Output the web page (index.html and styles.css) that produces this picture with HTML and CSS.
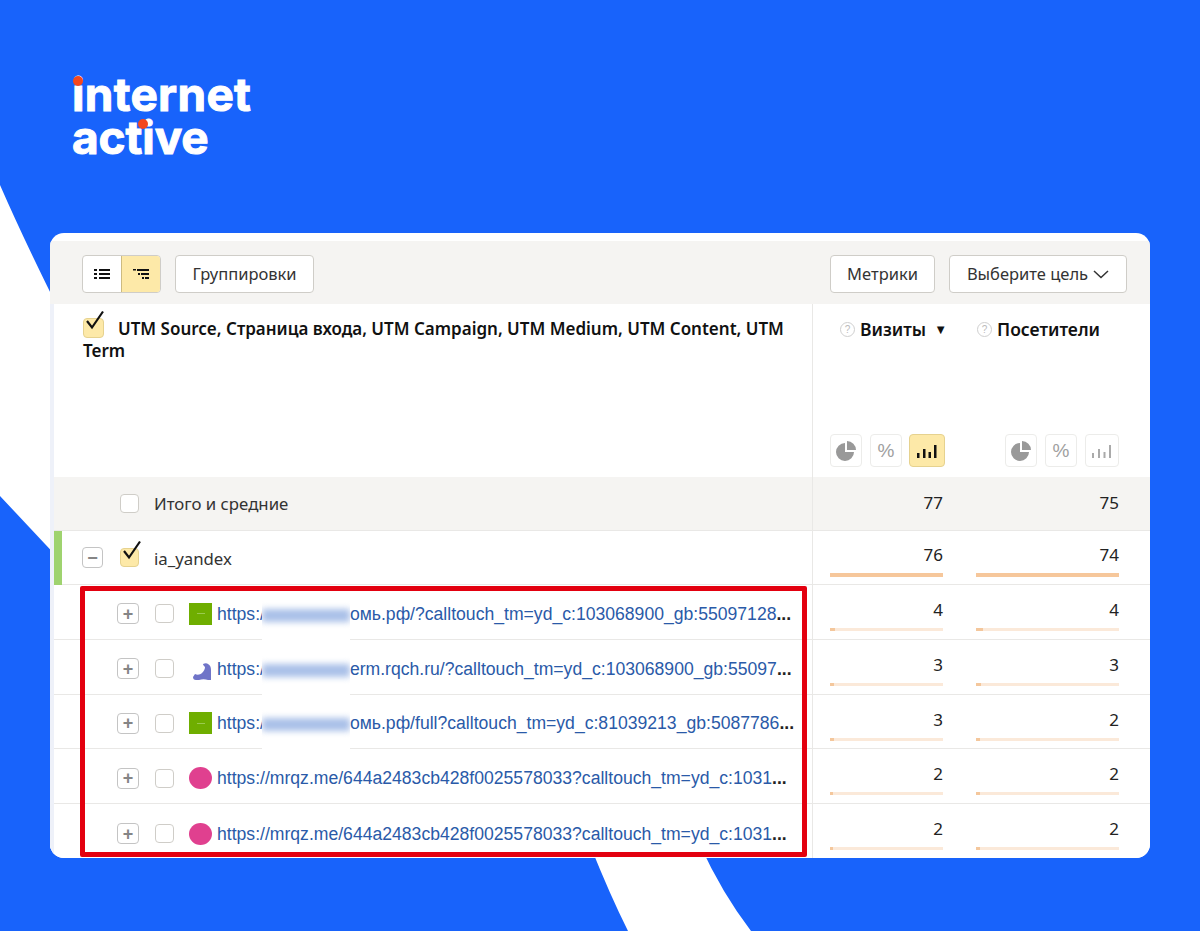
FILE: index.html
```html
<!DOCTYPE html>
<html lang="ru">
<head>
<meta charset="utf-8">
<title>internet active</title>
<link rel="stylesheet" href="styles.css">
</head>
<body>
<main class="page">
  <svg class="bg" width="1200" height="931" viewBox="0 0 1200 931" aria-hidden="true">
    <path fill="#fff" d="M0 185 Q24 240 60 312 L60 560 L0 496Z"/>
    <path fill="#fff" d="M590 845 L700 845 Q722 893 751 931 L628 931 Q610 895 590 845Z"/>
  </svg>

  <div class="logo">
    <div class="logo-line logo-top">internet<i class="dot dot-a"></i></div>
    <div class="logo-line">active<i class="dot dot-b"></i></div>
  </div>

  <section class="card">
    <div class="toolbar">
      <div class="tool-left">
        <div class="seg">
          <span class="seg-btn">
            <svg width="16" height="12" viewBox="0 0 16 12"><path fill="#111" d="M0 1h3v2H0zM5 1h11v2H5zM0 5h3v2H0zM5 5h11v2H5zM0 9h3v2H0zM5 9h11v2H5z"/></svg>
          </span>
          <span class="seg-btn seg-on">
            <svg width="16" height="12" viewBox="0 0 16 12"><path fill="#111" d="M0 1h3v1.500H0zM4 1h12v2H4zM5 5h2v2H5zM8 5h8v2H8zM9 9h2v2H9zM12 9h4v2h-4z"/></svg>
          </span>
        </div>
        <button class="btn btn-group">Группировки</button>
      </div>
      <div class="tool-right">
        <button class="btn btn-metrics">Метрики</button>
        <button class="btn btn-goal">Выберите цель
          <svg width="16" height="9" viewBox="0 0 16 9"><path fill="none" stroke="#333" stroke-width="1.500" d="M1 1l7 6.500L15 1"/></svg>
        </button>
      </div>
    </div>

    <div class="row row-head">
      <div class="left head-left">
        <p class="head-title"><span class="cb cb-on cb-head"><svg class="tick" width="24" height="24" viewBox="0 0 24 24"><path fill="none" stroke="#111" stroke-width="2.200" d="M4 11l5 6.500L20 1.500"/></svg></span>UTM Source, Страница входа, UTM Campaign, UTM Medium, UTM Content, UTM Term</p>
      </div>
      <div class="right head-right">
        <div class="metric metric-a">
          <div class="metric-title"><span class="help">?</span>Визиты<span class="sort">▼</span></div>
          <div class="minis">
            <span class="mini"><svg width="22" height="22" viewBox="0 0 22 22"><path fill="#999" d="M10 3v9h9a9 9 0 1 1-9-9zM12 1a9 9 0 0 1 9 9h-9z"/></svg></span>
            <span class="mini mini-pct">%</span>
            <span class="mini mini-on"><svg width="22" height="16" viewBox="0 0 22 16"><path fill="#111" d="M1 10h2.500v5H1zM7 6h2.500v9H7zM12.500 9H15v6h-2.500zM18 2h2.500v13H18z"/></svg></span>
          </div>
        </div>
        <div class="metric metric-b">
          <div class="metric-title"><span class="help">?</span>Посетители</div>
          <div class="minis">
            <span class="mini"><svg width="22" height="22" viewBox="0 0 22 22"><path fill="#999" d="M10 3v9h9a9 9 0 1 1-9-9zM12 1a9 9 0 0 1 9 9h-9z"/></svg></span>
            <span class="mini mini-pct">%</span>
            <span class="mini mini-last"><svg width="22" height="16" viewBox="0 0 22 16"><path fill="#aaa" d="M1 10h2v5H1zM7 6h2v9H7zM12.500 9h2v6h-2zM18 2h2v13h-2z"/></svg></span>
          </div>
        </div>
      </div>
    </div>

    <div class="row row-total">
      <div class="left total-left"><span class="cb"></span><span class="label">Итого и средние</span></div>
      <div class="right"><div class="num-cell"><span class="num">77</span></div><div class="num-cell cell-b"><span class="num">75</span></div></div>
    </div>

    <div class="row row-group">
      <div class="left group-left">
        <span class="marker"></span>
        <span class="exp exp-minus">−</span>
        <span class="cb cb-on"><svg class="tick" width="24" height="24" viewBox="0 0 24 24"><path fill="none" stroke="#111" stroke-width="2.200" d="M4 11l5 6.500L20 1.500"/></svg></span>
        <span class="label">ia_yandex</span>
      </div>
      <div class="right">
        <div class="num-cell"><span class="num">76</span><span class="bar bar-full"></span></div>
        <div class="num-cell cell-b"><span class="num">74</span><span class="bar bar-full"></span></div>
      </div>
    </div>

    <div class="row row-sub">
      <div class="left sub-left">
        <span class="exp">+</span><span class="cb"></span><span class="fav fav-green"><i></i></span>
        <span class="url">https:/<span class="smudge"></span>омь.рф/?calltouch_tm=yd_c:103068900_gb:55097128<b>...</b></span>
      </div>
      <div class="right">
        <div class="num-cell"><span class="num">4</span><span class="bar"><i style="width:5px"></i></span></div>
        <div class="num-cell cell-b"><span class="num">4</span><span class="bar"><i style="width:7px"></i></span></div>
      </div>
    </div>

    <div class="row row-sub">
      <div class="left sub-left">
        <span class="exp">+</span><span class="cb"></span>
        <span class="fav"><svg width="23" height="22" viewBox="0 0 23 22"><path fill="#6f74c8" d="M14 6c2-1 4-1 5 0 2 1 3 3 3 6v10h-3c-3-1-6-1-9 0H7c-2 0-3-1-3-3l2-3c2 1 5 1 7-1 2-2 3-4 3-6-1-1-2-2-2-3z"/></svg></span>
        <span class="url">https:/<span class="smudge"></span>erm.rqch.ru/?calltouch_tm=yd_c:103068900_gb:55097<b>...</b></span>
      </div>
      <div class="right">
        <div class="num-cell"><span class="num">3</span><span class="bar"><i style="width:4px"></i></span></div>
        <div class="num-cell cell-b"><span class="num">3</span><span class="bar"><i style="width:5px"></i></span></div>
      </div>
    </div>

    <div class="row row-sub">
      <div class="left sub-left">
        <span class="exp">+</span><span class="cb"></span><span class="fav fav-green"><i></i></span>
        <span class="url">https:/<span class="smudge"></span>омь.рф/full?calltouch_tm=yd_c:81039213_gb:5087786<b>...</b></span>
      </div>
      <div class="right">
        <div class="num-cell"><span class="num">3</span><span class="bar"><i style="width:4px"></i></span></div>
        <div class="num-cell cell-b"><span class="num">2</span><span class="bar"><i style="width:4px"></i></span></div>
      </div>
    </div>

    <div class="row row-sub">
      <div class="left sub-left">
        <span class="exp">+</span><span class="cb"></span><span class="fav fav-pink"></span>
        <span class="url">https://mrqz.me/644a2483cb428f0025578033?calltouch_tm=yd_c:1031<b>...</b></span>
      </div>
      <div class="right">
        <div class="num-cell"><span class="num">2</span><span class="bar"><i style="width:3px"></i></span></div>
        <div class="num-cell cell-b"><span class="num">2</span><span class="bar"><i style="width:4px"></i></span></div>
      </div>
    </div>

    <div class="row row-sub row-last">
      <div class="left sub-left">
        <span class="exp">+</span><span class="cb"></span><span class="fav fav-pink"></span>
        <span class="url">https://mrqz.me/644a2483cb428f0025578033?calltouch_tm=yd_c:1031<b>...</b></span>
      </div>
      <div class="right">
        <div class="num-cell"><span class="num">2</span><span class="bar"><i style="width:3px"></i></span></div>
        <div class="num-cell cell-b"><span class="num">2</span><span class="bar"><i style="width:4px"></i></span></div>
      </div>
    </div>

    <div class="highlight"></div>
  </section>
</main>
</body>
</html>
```
FILE: styles.css
```css
* { box-sizing: border-box; }
html, body { margin: 0; padding: 0; }
body { background: #1863fb; font-family: "Noto Sans", "Liberation Sans", sans-serif; color: #222; }

.page {
  position: relative;
  width: 1200px;
  height: 931px;
  overflow: hidden;
  background: #1863fb;
  padding-top: 73px;
}
.bg { position: absolute; left: 0; top: 0; }

/* logo */
.logo {
  position: relative;
  margin-left: 72px;
  height: 88px;
  font-family: "Inter", "Lato", sans-serif;
  font-weight: 700;
  font-size: 46px;
  line-height: 43px;
  color: #fff;
  letter-spacing: -0.1px;
  -webkit-text-stroke: 1px #fff;
}
.logo-top { letter-spacing: 0.3px; }
.logo-line { position: relative; white-space: nowrap; }
.dot {
  position: absolute;
  width: 10px;
  height: 10px;
  border-radius: 50%;
  background: #f4481e;
  -webkit-text-stroke: 0;
}
.dot-a { left: 1px; top: 3px; }
.dot-b { left: 66px; top: 3px; }

/* card */
.card {
  position: relative;
  width: 1100px;
  height: 625px;
  margin: 72px 0 0 50px;
  background: #fff;
  border-radius: 14px;
  overflow: hidden;
  padding-top: 8px;
}
.toolbar {
  height: 63px;
  background: #f5f4f2;
  display: grid;
  grid-template-columns: 762px 1fr;
  align-items: start;
  padding-top: 14px;
}
.tool-left { display: flex; gap: 14px; padding-left: 32px; }
.tool-right { display: flex; gap: 14px; padding-left: 18px; }

.btn {
  height: 38px;
  background: #fff;
  border: 1px solid #cfcdc8;
  border-radius: 4px;
  font: 400 16.500px/1 "Noto Sans", "Liberation Sans", sans-serif;
  color: #333;
  padding: 0;
}
.btn-group { width: 139px; }
.btn-metrics { width: 105px; }
.btn-goal {
  width: 178px;
  display: flex;
  align-items: center;
  justify-content: center;
  gap: 5px;
}
.seg { display: flex; width: 79px; height: 38px; border: 1px solid #cfcdc8; border-radius: 4px; overflow: hidden; background: #fff; }
.seg-btn { flex: 1; display: flex; align-items: center; justify-content: center; }
.seg-on { background: #fde9a8; border-left: 1px solid #cdbb80; }

/* rows */
.row {
  display: grid;
  grid-template-columns: 759px 1fr;
  background: #fff;
  border-left: 4px solid #eef1f9;
}
.left { border-right: 1px solid #e9e8e6; border-bottom: 1px solid #e9e8e6; position: relative; }
.right { display: flex; padding-left: 17px; border-bottom: 1px solid #e9e8e6; position: relative; }
.row-last .left, .row-last .right { border-bottom: 0; }

.row-head { height: 173px; }
.row-head .left, .row-head .right { border-bottom: 0; }
.head-left { padding: 14px 24px 0 29px; }
.head-title {
  margin: 0;
  font-weight: 600;
  font-size: 17px;
  line-height: 22px;
  color: #111;
}
.head-right { justify-content: flex-start; }
.metric { display: flex; flex-direction: column; justify-content: space-between; padding: 13px 0 10px; }
.metric-a { width: 113px; }
.metric-b { width: 143px; margin-left: 33px; }
.metric-title {
  display: flex;
  align-items: center;
  font-weight: 600;
  font-size: 17.500px;
  line-height: 24px;
  color: #111;
  white-space: nowrap;
}
.metric-a .metric-title { padding-left: 10px; }
.metric-b .metric-title { padding-left: 1px; }
.help {
  width: 15px;
  height: 15px;
  margin-right: 5px;
  border: 1px solid #cfcfcf;
  border-radius: 50%;
  color: #bbb;
  font: 400 10px/13px "Liberation Sans", sans-serif;
  text-align: center;
  flex: none;
}
.sort { font-size: 13px; margin-left: 8px; color: #111; }
.minis { display: flex; gap: 8px; }
.metric-b .minis { justify-content: flex-end; }
.metric-a .minis { width: 116px; }
.mini {
  width: 32px;
  height: 33px;
  border: 1px solid #ececea;
  border-radius: 4px;
  display: flex;
  align-items: center;
  justify-content: center;
  background: #fff;
}
.mini-on { width: 36px; margin-left: -1px; background: #fde9a8; border-color: #e6d28f; }
.mini-last { width: 34px; }
.mini-pct { font: 400 19px/1 "Liberation Sans", sans-serif; color: #a0a0a0; }

.row-total { height: 54px; }
.row-total .left, .row-total .right { background: #f5f4f2; }
.row-total .num-cell { padding-top: 14px; }
.total-left { display: flex; align-items: center; padding-left: 66px; }
.label { font-size: 16.800px; color: #333; margin-left: 15px; }

.row-group { height: 54px; }
.row-group .num-cell { padding-top: 12px; }
.group-left { display: flex; align-items: center; padding-left: 28px; }
.marker { position: absolute; left: 0; top: 0; bottom: -1px; width: 8px; background: #9fd36f; }
.group-left .exp { width: 21px; margin-right: 17px; }
.group-left .label { padding-top: 2px; }

.row-sub { height: 54.800px; }
.row-sub .num-cell { padding-top: 13px; }
.sub-left { display: flex; align-items: center; padding-left: 63px; padding-top: 4px; }
.sub-left .exp { margin-right: 16px; }

.cb {
  position: relative;
  flex: none;
  display: inline-block;
  width: 19px;
  height: 19px;
  background: #fff;
  border: 1px solid #cfcdc8;
  border-radius: 4px;
}
.cb-on { background: #fde9a8; border-color: #e6d28f; }
.cb-head { vertical-align: -3px; margin-right: 14px; width: 21px; height: 20px; }
.tick { position: absolute; left: -1px; top: -9px; }

.exp {
  flex: none;
  display: flex;
  align-items: center;
  justify-content: center;
  width: 22px;
  height: 21px;
  border: 1px solid #c4c4c4;
  border-radius: 4px;
  background: #fff;
  color: #858585;
  font: 700 18px/1 "Liberation Sans", sans-serif;
}

.fav {
  flex: none;
  width: 23px;
  height: 22px;
  margin-left: 15px;
  margin-right: 5px;
  display: flex;
  align-items: center;
  justify-content: center;
}
.fav-green { background: #6fae00; }
.fav-green i { width: 8px; height: 1px; background: #9acb4e; }
.fav-pink { background: #e0408f; border-radius: 50%; }

.url {
  font: 400 17.600px/20px "Liberation Sans", Arial, sans-serif;
  color: #2a5aa8;
  white-space: nowrap;
  position: relative;
  z-index: 1;
}
.url b { font-weight: 700; color: #222; }
.smudge {
  position: relative;
  display: inline-block;
  width: 88px;
  margin-left: -3px;
  height: 14px;
  vertical-align: -2px;
}
.smudge::before {
  content: "";
  position: absolute;
  left: 0;
  right: 0;
  top: -4px;
  height: 40px;
  background: #fff;
}
.smudge::after {
  content: "";
  position: absolute;
  left: 0;
  right: 0;
  top: 1px;
  height: 13px;
  background: #a9c0e8;
  filter: blur(3px);
  clip-path: inset(-10px 0);
}

.num-cell { position: relative; width: 113px; text-align: right; padding-top: 11px; }
.cell-b { width: 143px; margin-left: 33px; }
.num { font-size: 17px; line-height: 24px; color: #222; display: block; }
.bar {
  position: absolute;
  left: 0;
  right: 0;
  top: 43px;
  height: 3px;
  background: #fbe9d9;
}
.bar i { display: block; height: 100%; background: #f4c79c; }
.bar-full { height: 4px; top: 42px; background: #f6c79b; }

.highlight {
  position: absolute;
  left: 30px;
  top: 353px;
  width: 727px;
  height: 271px;
  border: 5px solid #e3000f;
  border-radius: 2px;
  z-index: 2;
  pointer-events: none;
}
```
